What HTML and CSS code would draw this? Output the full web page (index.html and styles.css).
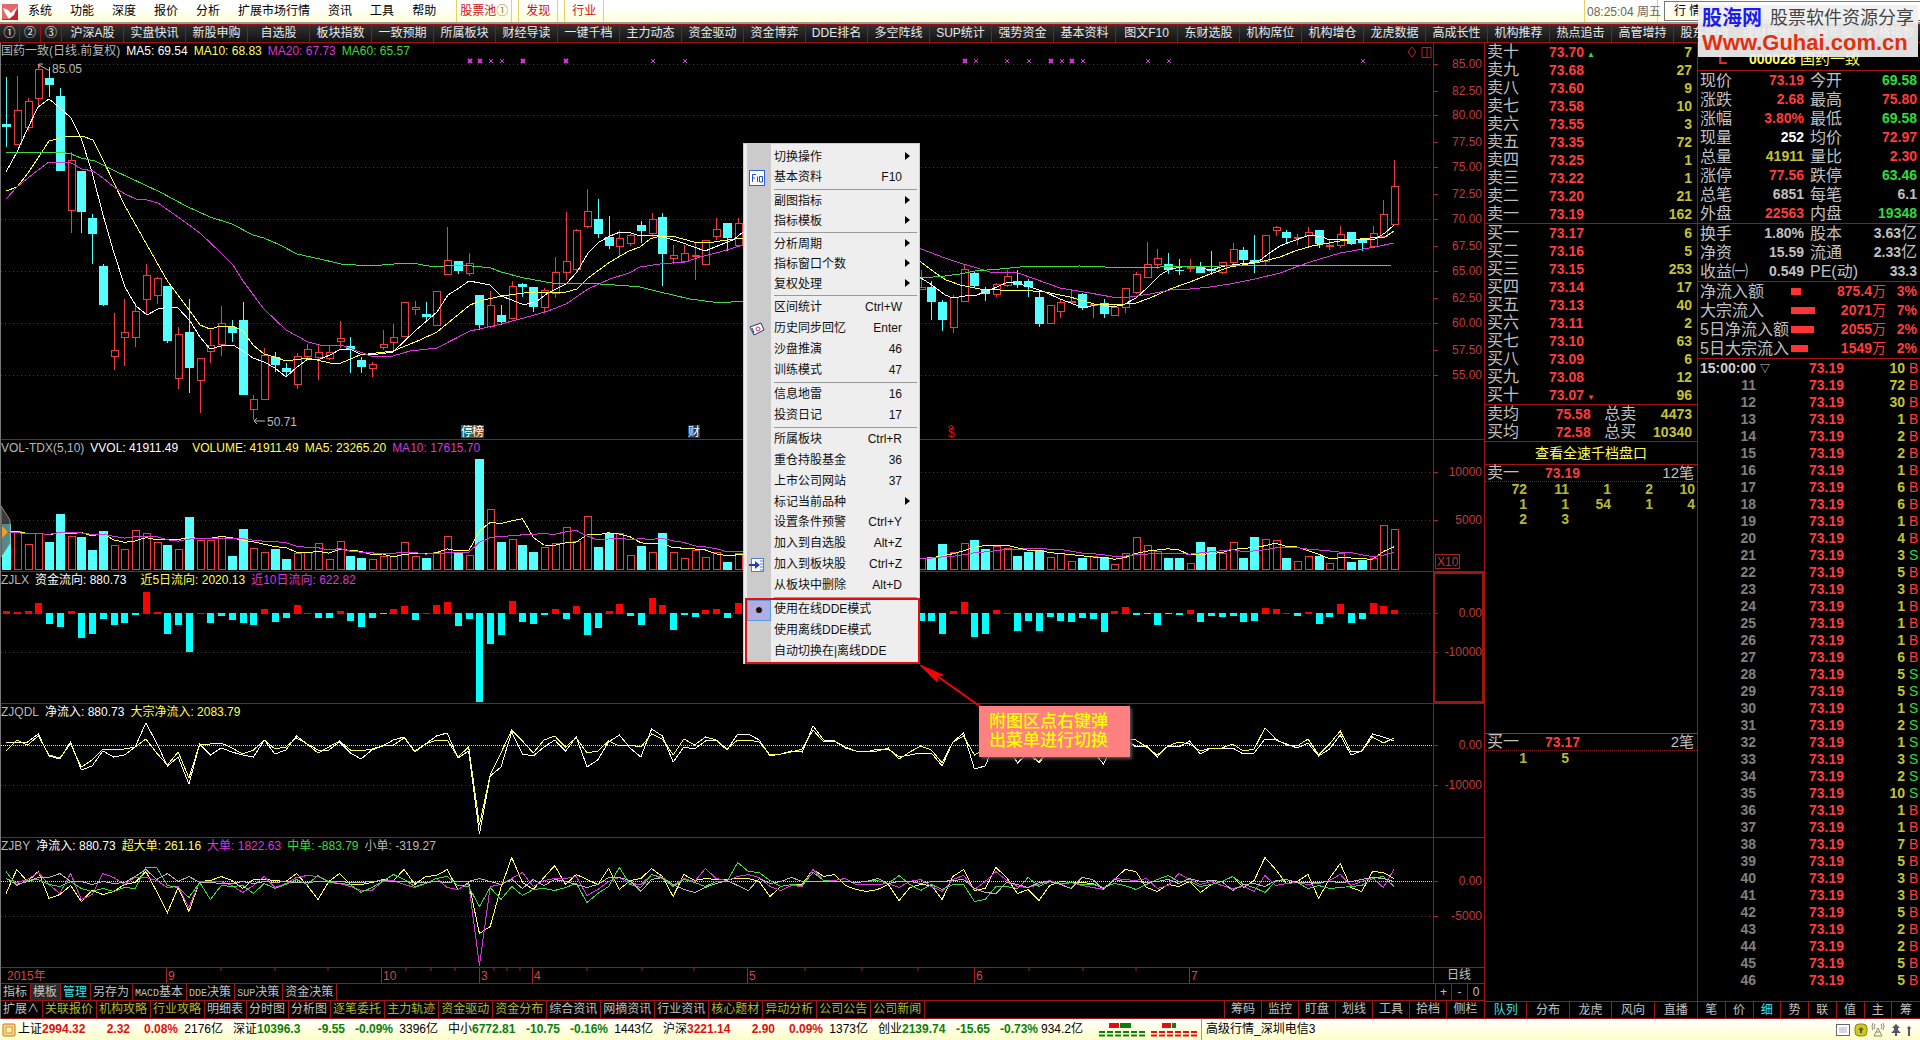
FILE: index.html
```html
<!DOCTYPE html>
<html lang="zh-CN">
<head>
<meta charset="utf-8">
<title>国药一致 000028</title>
<link rel="stylesheet" href="styles.css">
</head>
<body>
<div class="app">
  <header class="menubar">
    <svg class="logo" viewBox="0 0 16 16" aria-hidden="true"><rect width="16" height="16" fill="#c8232c"/><path d="M0 0h16v5L6 15H0z" fill="#e06a6a"/><path d="M1 4l5 2 3 3 6-6-3 8-5 4-4-6z" fill="#fff"/></svg>
    <nav class="menus">
      <button>系统</button><button>功能</button><button>深度</button><button>报价</button><button>分析</button><button>扩展市场行情</button><button>资讯</button><button>工具</button><button>帮助</button>
    </nav>
    <div class="quick"><button>股票池<span class="gold">①</span></button><button>发现</button><button>行业</button></div>
    <div class="clock">08:25:04 周五</div>
    <button class="mode">行 情</button>
  </header>
  <nav class="toolbar" id="toolbar"></nav>

  <main class="main">
    <section class="charts">
      <div class="panel panel-k">
        <div class="plot"><svg id="k"></svg>
          <p class="title"><span class="gr">国药一致(日线.前复权)</span><span class="wh">MA5: 69.54</span><span class="ye">MA10: 68.83</span><span class="ma">MA20: 67.73</span><span class="gn">MA60: 65.57</span></p>
        </div>
        <svg class="axis" id="k-axis"></svg>
      </div>
      <div class="panel">
        <div class="plot"><svg id="vol"></svg>
          <p class="title"><span class="gr">VOL-TDX(5,10)</span><span class="wh wide">VVOL: 41911.49</span><span class="ye">VOLUME: 41911.49</span><span class="ye">MA5: 23265.20</span><span class="ma">MA10: 17615.70</span></p>
        </div>
        <svg class="axis" id="vol-axis"></svg>
      </div>
      <div class="panel">
        <div class="plot"><svg id="flow"></svg>
          <p class="title"><span class="gr">ZJLX</span><span class="wh wide">资金流向: 880.73</span><span class="ye">近5日流向: 2020.13</span><span class="ma">近10日流向: 622.82</span></p>
        </div>
        <svg class="axis active" id="flow-axis"></svg>
      </div>
      <div class="panel panel-q">
        <div class="plot"><svg id="net"></svg>
          <p class="title"><span class="gr">ZJQDL</span><span class="wh">净流入: 880.73</span><span class="ye">大宗净流入: 2083.79</span></p>
        </div>
        <svg class="axis" id="net-axis"></svg>
      </div>
      <div class="panel panel-b">
        <div class="plot"><svg id="split"></svg>
          <p class="title"><span class="gr">ZJBY</span><span class="wh">净流入: 880.73</span><span class="ye">超大单: 261.16</span><span class="ma">大单: 1822.63</span><span class="gn">中单: -883.79</span><span class="gr">小单: -319.27</span></p>
        </div>
        <svg class="axis" id="split-axis"></svg>
      </div>
      <div class="panel dates">
        <div class="plot"><svg id="dates"></svg></div>
        <button class="period">日线</button>
      </div>
      <div class="tabs">
        <button>指标</button><button class="on">模板</button><button class="cy">管理</button><button>另存为</button><button><span class="lat">MACD</span>基本</button><button><span class="lat">DDE</span>决策</button><button><span class="lat">SUP</span>决策</button><button>资金决策</button>
        <div class="zoomers"><button>+</button><button>-</button><button>0</button></div>
      </div>
      <div class="tabs tabs-low">
        <button>扩展∧</button><button class="ol">关联报价</button><button class="ol">机构攻略</button><button class="ol">行业攻略</button><button>明细表</button><button>分时图</button><button>分析图</button><button class="ol">逐笔委托</button><button class="ol">主力轨迹</button><button class="ol">资金驱动</button><button class="ol">资金分布</button><button>综合资讯</button><button>网摘资讯</button><button>行业资讯</button><button class="ol">核心题材</button><button class="ol">异动分析</button><button class="ol">公司公告</button><button class="ol">公司新闻</button>
        <div class="side-tools"><button>筹码</button><button>监控</button><button>盯盘</button><button>划线</button><button>工具</button><button>拾档</button><button>侧栏</button></div>
      </div>

      <svg class="flap" viewBox="0 0 10 52" aria-hidden="true"><path d="M0 0L9 14V37L0 51z" fill="#555" fill-opacity=".7" stroke="#888"/><path d="M1 20l6 6-6 6z" fill="#f0a020"/></svg>
      <div class="context" id="context" role="menu"></div>
      <svg class="pointer" viewBox="0 0 64 46" aria-hidden="true"><path d="M18 12L62 43" stroke="#f00" stroke-width="2"/><path d="M1 1l23 10-5 1-1 6z" fill="#f00" stroke="#f00"/></svg>
      <p class="callout">附图区点右键弹<br>出菜单进行切换</p>
    </section>

    <section class="orders">
      <table class="levels" id="sell"></table>
      <table class="levels" id="buy"></table>
      <table class="levels avg">
        <tr><th>卖均</th><td class="price">75.58</td><th>总卖</th><td class="vol">4473</td></tr>
        <tr><th>买均</th><td class="price">72.58</td><th>总买</th><td class="vol">10340</td></tr>
      </table>
      <a class="full" href="#queue">查看全速千档盘口</a>
      <div class="queue queue-sell" id="queue">
        <h2><span>卖一</span><b>73.19</b><em>12笔</em></h2>
        <div class="lots"><i>72</i><i>11</i><i>1</i><i>2</i><i>10</i><i>1</i><i>1</i><i>54</i><i>1</i><i>4</i><i>2</i><i>3</i></div>
      </div>
      <div class="queue queue-buy">
        <h2><span>买一</span><b>73.17</b><em>2笔</em></h2>
        <div class="lots"><i>1</i><i>5</i></div>
      </div>
      <div class="foot"><button class="cy">队列</button><button>分布</button><button>龙虎</button><button>风向</button><button>直播</button></div>
    </section>

    <section class="quote">
      <h1><span class="flag">L</span><b>000028</b> 国药一致</h1>
      <table class="facts" id="facts"></table>
      <table class="facts" id="facts2"></table>
      <table class="flows" id="flows"></table>
      <table class="ticks" id="ticks"></table>
      <div class="foot foot-right"><button>笔</button><button>价</button><button class="cy">细</button><button>势</button><button>联</button><button>值</button><button>主</button><button>筹</button></div>
    </section>
  </main>

  <footer class="status">
    <svg class="coin" viewBox="0 0 14 14" aria-hidden="true"><rect x="1" y="1" width="12" height="12" rx="1" fill="#ffd890" stroke="#c07810"/><rect x="4" y="4" width="6" height="6" fill="#fff2c0" stroke="#e09020"/></svg>
    <div class="index up"><span>上证</span><b>2994.32</b><b>2.32</b><b>0.08%</b><span>2176亿</span></div>
    <div class="index down"><span>深证</span><b>10396.3</b><b>-9.55</b><b>-0.09%</b><span>3396亿</span></div>
    <div class="index down"><span>中小</span><b>6772.81</b><b>-10.75</b><b>-0.16%</b><span>1443亿</span></div>
    <div class="index up"><span>沪深</span><b>3221.14</b><b>2.90</b><b>0.09%</b><span>1373亿</span></div>
    <div class="index down"><span>创业</span><b>2139.74</b><b>-15.65</b><b>-0.73%</b><span>934.2亿</span></div>
    <svg class="meters" viewBox="0 0 98 14" aria-hidden="true">
      <path d="M10 2.5h10M63 2.5h9" stroke="#e01010" stroke-width="5"/><path d="M21 2.5h11M73 2.5h4" stroke="#0a800a" stroke-width="5"/>
      <path d="M0 9h47M0 12.500h47" stroke="#0a800a" stroke-width="2" stroke-dasharray="6 2"/>
      <path d="M52 9h46M52 12.500h46" stroke="#e01010" stroke-width="2" stroke-dasharray="6 2"/>
    </svg>
    <span class="server">高级行情_深圳电信3</span>
    <svg class="tray" viewBox="0 0 78 14" aria-hidden="true">
      <rect x=".5" y="1.500" width="13" height="11" fill="#fff" stroke="#667"/><path d="M3 5h8M3 7h8M3 9h8" stroke="#aab"/>
      <rect x="19" y="1" width="12" height="12" rx="4" fill="#d0c820" stroke="#8a8410"/><path d="M25 4l3 3h-2v3h-2V7h-2z" fill="#554"/>
      <g fill="none" stroke="#887"><path d="M42 5l-4 8h8zM40 9h4M39 1q-2 3 0 5M45 1q2 3 0 5M37 0q-2 3 0 7M47 0q2 3 0 7"/></g>
      <path d="M60 1l4 4h-2v2l3 3h-4v3h-2v-3h-4l3-3V5h-2zM73 3l2 2-1 1v7h-2V6l-1-1z" fill="#556"/>
    </svg>
  </footer>

  <div class="watermark">
    <p class="wm-top"><strong>股海网</strong><span>股票软件资源分享</span></p>
    <p class="wm-url">Www.Guhai.com.cn</p>
  </div>
</div>
<script src="app.js"></script>
</body>
</html>
```
FILE: styles.css
```css
* { box-sizing: border-box; }
html, body { margin: 0; background: #000; }
body { font: 12px/16px "Liberation Sans", "Noto Sans CJK SC", sans-serif; color: #c0c0c0; }
p, h1, h2 { margin: 0; font-size: inherit; font-weight: inherit; }
button { font: inherit; color: inherit; background: none; border: 0; padding: 0; white-space: nowrap; }
table { border-collapse: collapse; width: 100%; table-layout: fixed; }
th { font-weight: 400; text-align: left; }
th, td { padding: 0; white-space: nowrap; vertical-align: top; }
.app { position: relative; min-height: 100vh; display: flex; flex-direction: column; overflow: hidden; }

.wh { color: #fff; } .ye { color: #ff5; } .ma { color: #d838d8; } .gn { color: #3ddc3d; } .gr { color: #b8b8b8; }
.cy { color: #3ce0e8; } .ol { color: #b4b432; }

.menubar { display: flex; height: 24px; background: linear-gradient(#fff 30%, #ffffd8); border-bottom: 2px solid #999; color: #000; line-height: 22px; }
.logo { width: 16px; height: 16px; margin: 4px 10px 0 2px; }
.menus { display: flex; gap: 18px; }
.quick { display: flex; gap: 6px; margin-left: 20px; color: #d01010; }
.quick button { border: solid #e8d060; border-width: 0 1px; padding: 0 3px; }
.quick button + button { padding: 0 7px; }
.gold { color: #b08010; }
.clock { margin-left: auto; border: solid #e8d060; border-width: 0 1px; padding: 0 2px; width: 74px; white-space: nowrap; color: #666; line-height: 24px; }
.mode { width: 256px; margin: 1px 0 0 6px; padding-left: 9px; text-align: left; border: 1px solid #777; border-right: 0; height: 20px; line-height: 18px; }

.toolbar { display: flex; height: 19px; overflow: hidden; border: solid #a01010; border-width: 1px 0; background: linear-gradient(#333, #111); color: #e8e8e8; line-height: 17px; }
.toolbar button { flex: 0 0 62px; border-right: 1px solid #a01010; }
.toolbar .num { flex-basis: 21px; }
.toolbar .num:first-child { flex-basis: 20px; }

.main { flex: 1; display: grid; grid-template-columns: minmax(0, 1fr) 213px 223px; }
.charts { position: relative; display: flex; flex-direction: column; border-left: 1px solid #777; }
.panel { display: flex; height: 132px; border-bottom: 1px solid #a01414; }
.panel-k { height: 397px; }
.panel-q { height: 134px; }
.panel-b { height: 130px; }
.plot { flex: 1; position: relative; min-width: 0; overflow: hidden; }
.plot svg { display: block; width: 100%; height: 100%; }
.axis { width: 51px; height: 100%; border-left: 1px solid #a01414; display: block; }
.axis.active { outline: 2px solid #a01414; outline-offset: -2px; }
.title { position: absolute; left: 0; top: 0; display: flex; gap: 6px; white-space: nowrap; }
.title .wide { margin-right: 8px; }
svg text { font-size: 12px; }
.dates { height: 16px; }
.period { width: 51px; border-left: 1px solid #a01414; line-height: 15px; }
.tabs { display: flex; height: 17px; border-bottom: 1px solid #a01414; line-height: 15px; }
.tabs-low { height: 18px; line-height: 17px; }
.tabs button { border-right: 1px solid #a01414; padding: 0 3px 0 2px; }
.tabs .on { background: #2a2a2a; }
.lat { font: 10px "Liberation Mono", monospace; }
.zoomers, .side-tools { margin-left: auto; display: flex; border-left: 1px solid #a01414; }
.zoomers button { width: 16px; padding: 0; }
.side-tools button { width: 37px; padding: 0; }
.zoomers button:last-child, .side-tools button:last-child { border-right: 0; }

.flap { position: absolute; left: 0; top: 463px; width: 10px; height: 52px; }
.context { position: absolute; left: 742px; top: 100px; width: 177px; padding: 3px 2px 3px 3px; border: 1px solid #ccc; background: linear-gradient(90deg, #eee 3px, #cbcbcb 3px, #cbcbcb 27px, #eee 27px); color: #111; }
.context button { position: relative; display: flex; justify-content: space-between; width: 100%; height: 21px; line-height: 21px; padding: 0 15px 0 27px; }
.context .sub { height: 20px; line-height: 20px; }
.context .sub::after { content: ""; margin: 5px -8px 0 0; height: 0; border: 4px solid transparent; border-left: 5px solid #000; border-right: 0; }
.context hr { margin: 1px 0 1px 27px; border: 0; height: 1px; background: #999; }
.context svg { position: absolute; left: 2px; top: 3px; width: 16px; height: 16px; }
.context .modes { margin: 0 -2px -3px -1px; padding: 0 2px 1px 1px; outline: 2px solid #e01010; outline-offset: -1px; }
.context .checked::before { content: "●"; position: absolute; left: 0; top: 1px; width: 22px; height: 19px; line-height: 17px; font-size: 14px; text-align: center; background: #b0aee0; border: 1px solid #58a0e0; }
.pointer { position: absolute; left: 918px; top: 621px; width: 64px; height: 46px; fill: none; }
.callout { position: absolute; left: 978px; top: 663px; width: 151px; height: 51px; padding: 6px 0 0 10px; background: #ff8080; color: #ff0; font-size: 17px; line-height: 19px; font-weight: 500; box-shadow: 2px 2px 3px #555; }

.orders, .quote { display: flex; flex-direction: column; border-left: 1px solid #a01414; font-size: 14px; }
.levels { border-bottom: 1px solid #a01414; }
.levels th, .levels td { height: 18px; line-height: 18px; overflow: hidden; }
.levels th { width: 64px; padding-left: 2px; font-size: 16px; }
.levels td { font-weight: 700; }
.price { color: #ff3c3c; }
.levels .vol { text-align: right; padding-right: 5px; color: #c4c432; }
.best { padding-left: 3px; font-size: 8px; line-height: 8px; }
.avg th + td { width: 44px; }
.avg td + th { width: 40px; padding-left: 0; }
.full { display: block; height: 23px; line-height: 22px; border-bottom: 1px solid #a01414; text-align: center; color: #ff5; text-decoration: none; }
.queue-sell { height: 269px; border-bottom: 1px solid #c02020; }
.queue-buy { flex: 1; }
.queue h2 { display: flex; height: 17px; line-height: 16px; font-size: 16px; border-bottom: 1px dotted #802020; padding: 0 3px 0 2px; }
.queue h2 span { width: 58px; }
.queue h2 b { font-size: 14px; color: #ff3c3c; }
.queue h2 em { margin-left: auto; font-style: normal; font-size: 15px; }
.lots { display: grid; grid-template-columns: repeat(5, 1fr); line-height: 15px; padding: 0 2px 0 0; }
.lots i { font-style: normal; font-weight: 700; text-align: right; color: #b8b830; }
.foot { display: grid; grid-template-columns: repeat(5, 1fr); height: 18px; border: solid #a01414; border-width: 1px 0; font-size: 12px; line-height: 16px; }
.foot-right { grid-template-columns: repeat(8, 1fr); margin-top: auto; }
.foot button { border-right: 1px solid #a01414; }
.foot button:last-child { border-right: 0; }

.quote h1 { height: 28px; padding: 6px 0 0 20px; line-height: 20px; border-bottom: 1px solid #a01414; color: #ff5; font-size: 15px; }
.quote h1 b { font-size: 14px; }
.flag { display: inline-block; width: 31px; color: #e03030; font-weight: 700; }
.facts, .flows { border-bottom: 1px solid #a01414; }
.facts th, .facts td, .flows th, .flows td { height: 19px; line-height: 19px; }
.facts th { width: 50px; font-size: 16px; padding-left: 2px; }
.facts td + th { padding-left: 6px; width: 60px; }
.facts td { text-align: right; font-weight: 700; }
.facts td:last-child { padding-right: 3px; }
.facts small { font-size: 16px; line-height: 16px; font-weight: 400; }
.flows th { width: 93px; padding-left: 2px; font-size: 16px; }
.flows td { color: #ff3c3c; text-align: right; font-weight: 700; }
.flows td:nth-child(2) { width: 25px; vertical-align: middle; }
.flows td:last-child { width: 34px; padding-right: 3px; }
.flows small { font-size: 14px; line-height: 14px; font-weight: 400; }
.bar { display: block; height: 7px; background: #f33; }
.ticks { margin-top: 1px; }
.ticks th, .ticks td { height: 17px; line-height: 17px; }
.ticks th { width: 58px; text-align: right; color: #808080; font-weight: 700; }
.ticks tr:first-child th { color: #d0d0d0; }
.ticks td { font-weight: 700; text-align: right; color: #c4c432; }
.ticks .mark { width: 14px; text-align: left; font-weight: 400; font-size: 10px; padding-left: 4px; color: #d0d0d0; }
.ticks .price { width: 74px; color: #ff3c3c; }
.ticks .side { width: 15px; font-weight: 400; text-align: left; padding-left: 4px; }
.red, .ticks .side.red { color: #ff3c3c; }
.green, .ticks .side.green { color: #2edc3a; }
.white { color: #fff; }
.yellow { color: #c4c432; }

.status { display: flex; height: 21px; line-height: 21px; background: linear-gradient(#fff, #ffffc8); color: #000; white-space: nowrap; }
.coin { width: 14px; height: 14px; margin: 4px 2px 0; }
.index { display: grid; grid-template-columns: 24px 46px 42px 48px 45px; width: 215px; }
.index > :nth-child(n+3) { text-align: right; }
.up b { color: #e01010; }
.down b { color: #0a800a; }
.meters { width: 98px; height: 14px; margin: 4px 4px 0 6px; }
.server { border-left: 1px solid #999; padding-left: 4px; }
.tray { width: 78px; height: 14px; margin: 4px 6px 0 auto; }

.watermark { position: absolute; right: 2px; top: 5px; width: 220px; height: 52px; padding-left: 4px; background: rgba(240, 240, 240, .93); white-space: nowrap; }
.wm-top { display: flex; gap: 8px; line-height: 26px; font-size: 18px; color: #444; }
.wm-top strong { font-size: 20px; color: #1c1cf0; }
.wm-url { font-size: 22px; line-height: 24px; font-weight: 700; color: #e03010; }
```
FILE: app.js
```js
const $ = id => document.getElementById(id);

/* ---- toolbar, context menu and side tables ---- */
const tools = '沪深A股 实盘快讯 新股申购 自选股 板块指数 一致预期 所属板块 财经导读 一键千档 主力动态 资金驱动 资金博弈 DDE排名 多空阵线 SUP统计 强势资金 基本资料 图文F10 东财选股 机构席位 机构增仓 龙虎数据 高成长性 机构推荐 热点追击 高管增持 股东增持 理财增值 季报年报 价格指数'.split(' ');
$('toolbar').innerHTML = ['①', '②', '③'].map(t => `<button class="num">${t}</button>`).join('') + tools.map(t => `<button>${t}</button>`).join('');

const icons = {
  基本资料: '<svg viewBox="0 0 16 16"><rect x=".5" y=".5" width="15" height="15" fill="#fff" stroke="#3060d0"/><path d="M3.500 12V4.500H7M3.500 8H6M8.500 12V6.500M10.500 6.500h3V12h-3z" fill="none" stroke="#2050c8"/></svg>',
  历史同步回忆: '<svg viewBox="0 0 16 16"><path d="M1 6l11-4 3 7-10 5z" fill="#fff" stroke="#203878"/><path d="M3 7l2 5" stroke="#203878"/><circle cx="9" cy="8" r="2" fill="none" stroke="#d03050"/></svg>',
  加入到板块股: '<svg viewBox="0 0 16 16"><rect x="2.500" y="1.500" width="12" height="13" fill="#fff" stroke="#5080d0"/><path d="M11 4h3M11 7h3M11 10h3M11 13h3" stroke="#5080d0"/><path d="M0 7h6V4l5 4-5 4V9H0z" fill="#2040c0"/></svg>'
};
const entry = s => {
  if (s === '-') return '<hr>';
  const [name, key] = s.split('|');
  return key === '>' ? `<button class="sub" role="menuitem">${name}</button>` : `<button role="menuitem">${icons[name] || ''}<span>${name}</span><span>${key}</span></button>`;
};
$('context').innerHTML = ['切换操作|>', '基本资料|F10', '-', '副图指标|>', '指标模板|>', '-', '分析周期|>', '指标窗口个数|>', '复权处理|>', '-', '区间统计|Ctrl+W', '历史同步回忆|Enter', '沙盘推演|46', '训练模式|47', '-', '信息地雷|16', '投资日记|17', '-', '所属板块|Ctrl+R', '重仓持股基金|36', '上市公司网站|37', '标记当前品种|>', '设置条件预警|Ctrl+Y', '加入到自选股|Alt+Z', '加入到板块股|Ctrl+Z', '从板块中删除|Alt+D', '-'].map(entry).join('') +
  '<div class="modes"><button class="checked" role="menuitemradio" aria-checked="true">使用在线DDE模式</button><button role="menuitemradio" aria-checked="false">使用离线DDE模式</button><button role="menuitemradio" aria-checked="false">自动切换在|离线DDE</button></div>';

const level = (side, names, data) => data.map(([p, v], i) => {
  const mark = side === '卖' && i === 0 ? '<span class="best green">▲</span>' : side === '买' && i === 9 ? '<span class="best">▼</span>' : '';
  return `<tr><th>${side}${names[i]}</th><td class="price">${p}${mark}</td><td class="vol">${v}</td></tr>`;
}).join('');
$('sell').innerHTML = level('卖', '十九八七六五四三二一', [['73.70', 7], ['73.68', 27], ['73.60', 9], ['73.58', 10], ['73.55', 3], ['73.35', 72], ['73.25', 1], ['73.22', 1], ['73.20', 21], ['73.19', 162]]);
$('buy').innerHTML = level('买', '一二三四五六七八九十', [['73.17', 6], ['73.16', 5], ['73.15', 253], ['73.14', 17], ['73.13', 40], ['73.11', 2], ['73.10', 63], ['73.09', 6], ['73.08', 12], ['73.07', 96]]);

const fact = ([a, b, c, d, e, f]) => `<tr><th>${a}</th><td class="${c}">${b}</td><th>${d}</th><td class="${f}">${e}</td></tr>`;
$('facts').innerHTML = [['现价', '73.19', 'red', '今开', '69.58', 'green'], ['涨跌', '2.68', 'red', '最高', '75.80', 'red'], ['涨幅', '3.80%', 'red', '最低', '69.58', 'green'], ['现量', '252', 'white', '均价', '72.97', 'red'], ['总量', '41911', 'yellow', '量比', '2.30', 'red'], ['涨停', '77.56', 'red', '跌停', '63.46', 'green'], ['总笔', '6851', '', '每笔', '6.1', ''], ['外盘', '22563', 'red', '内盘', '19348', 'green']].map(fact).join('');
$('facts2').innerHTML = [['换手', '1.80%', '', '股本', '3.63<small>亿</small>', ''], ['净资', '15.59', '', '流通', '2.33<small>亿</small>', ''], ['收益㈠', '0.549', '', 'PE(动)', '33.3', '']].map(fact).join('');
$('flows').innerHTML = [['净流入额', 10, '875.4', '3%'], ['大宗流入', 24, '2071', '7%'], ['5日净流入额', 23, '2055', '2%'], ['5日大宗流入', 17, '1549', '2%']].map(([n, w, v, p]) => `<tr><th>${n}</th><td><span class="bar" style="width:${w}px"></span></td><td>${v}<small>万</small></td><td>${p}</td></tr>`).join('');
$('ticks').innerHTML = '10B 72B 30B 1B 2B 2B 1B 6B 6B 1B 4B 3S 5B 3B 1B 1B 1B 6B 5S 5S 1S 2S 1S 3S 2S 10S 1B 1B 7B 5B 3B 3B 5B 2B 2B 5B 5B'.split(' ').map((t, i) => {
  const side = t.slice(-1);
  return `<tr><th>${i ? i + 10 : '15:00:00'}</th><td class="mark">${i ? '' : '▽'}</td><td class="price">73.19</td><td>${t.slice(0, -1)}</td><td class="side ${side === 'B' ? 'red' : 'green'}">${side}</td></tr>`;
}).join('');

/* ---- daily candles: direction, high, body top, body bottom, low ---- */
const candles = `c77,124,127,147 r76,110,145,145 r98,101,128,131 r64,69,99,108 c67,78,85,97 c88,96,171,171 r152,160,211,233 c171,171,212,233 c214,218,234,264 c264,266,305,306
r313,350,357,370 r299,332,338,366 r303,311,338,347 r264,275,300,314 r277,278,296,304 c286,286,341,343 r327,334,379,389 c299,332,368,393 r358,358,381,413 r330,345,352,363
r306,323,345,356 c320,327,333,342 c302,320,395,395 r395,399,410,420 r348,355,400,400 c352,357,365,372 c363,368,372,377 r353,356,385,389 r344,349,357,360 r345,352,358,380
r345,352,359,360 r321,338,342,348 c337,346,350,373 c357,360,367,373 r362,364,369,377 r330,344,348,350 r324,337,343,352 r302,302,337,337 r301,307,310,315 c302,314,317,320
r291,291,326,326 r227,260,275,275 c261,261,271,274 r253,263,274,276 c295,295,325,330 r291,305,327,328 c305,315,322,325 r281,286,319,319 c283,284,287,297 c287,287,307,312
r288,290,308,311 r257,272,294,298 r212,261,273,280 r229,230,270,272 r189,211,227,228 c199,219,234,238 c216,237,246,249 r230,238,247,256 r234,235,244,246 c221,225,231,243
r213,219,234,237 c213,217,254,286 r245,255,259,264 r245,253,262,263 r243,255,256,280 r240,240,265,265 r218,229,237,240 c223,223,238,251 r218,223,246,246 r215,220,236,240
c218,222,240,244 c224,230,246,250 r226,232,244,248 c230,236,250,254 r234,238,250,252 r226,230,244,246 c228,232,250,254 c236,244,260,262 r240,246,258,262 c246,250,264,268
c250,258,272,276 r256,260,272,276 c258,262,276,280 c264,270,284,288 r268,274,288,290 r270,287,290,290 c281,287,302,320 c300,302,320,331 r295,297,328,333 r264,269,302,302
c271,273,286,288 c287,290,294,301 r283,284,295,297 r270,276,286,287 c270,281,285,288 c279,281,287,297 c291,297,324,327 r305,305,324,324 r300,302,312,318 r290,301,303,303
c293,294,308,310 r304,304,306,318 c299,303,314,318 r305,307,316,316 r288,288,308,313 r272,274,293,294 r242,264,278,278 r249,258,265,269 c253,264,270,274 c259,270,271,275
r259,267,269,272 c262,267,273,273 c251,269,271,275 r262,262,273,274 r243,249,263,264 c247,250,260,264 c235,260,263,273 r235,235,262,265 r226,227,231,236 c230,232,238,244
r234,237,239,245 r227,232,236,247 c230,230,244,248 r240,245,247,250 r226,234,246,248 c232,232,244,245 c239,240,243,251 r226,233,247,248 r200,214,237,238 r160,186,225,225`
  .split(/\s+/).map(s => ({ down: s[0] === 'c', v: s.slice(1).split(',').map(Number) }));

const averages = {
  '#fff': '6,172 17,152 27,130 38,107 49,99 59,107 71,118 81,138 92,172 103,215 114,253 125,287 136,306 147,315 158,309 168,307 178,308 190,321 200,337 210,349 221,346 233,345 243,351 253,358 264,362 275,368 286,377 297,367 308,359 320,359 330,355 341,349 350,349 360,354 371,355 393,352 415,331 437,312 448,295 459,288 469,281 480,283 490,285 501,296 512,300 524,305 537,301 548,293 566,284 577,272 588,253 599,242 610,236 620,232 631,233 640,236 650,235 660,236 680,242 694,247 705,251 720,245 733,240 743,232 800,240 860,254 921,278 932,285 945,295 953,298 965,296 977,295 990,290 1008,282 1020,284 1030,287 1045,292 1060,299 1084,308 1098,304 1112,307 1123,305 1136,298 1148,287 1160,275 1170,269 1182,267 1195,266 1210,270 1225,266 1240,264 1258,262 1268,254 1280,246 1290,242 1310,235 1322,237 1330,240 1345,239 1360,240 1375,239 1385,233 1394,225',
  '#ff5': '6,191 17,187 28,173 38,158 49,141 60,138 71,136 82,136 93,140 103,160 125,206 147,245 168,282 190,311 200,325 210,329 221,326 233,326 243,331 253,345 264,354 275,357 286,361 308,358 330,363 341,363 360,355 393,351 420,340 437,332 470,305 480,301 501,296 524,293 544,292 566,292 577,289 588,278 610,262 629,251 640,247 650,239 660,236 672,236 694,242 708,243 720,241 743,238 830,240 921,262 934,272 946,280 960,285 980,289 1000,290 1020,290 1045,292 1070,297 1094,304 1112,305 1125,304 1136,303 1150,298 1170,289 1190,282 1210,274 1230,267 1260,262 1280,257 1295,251 1312,246 1340,241 1370,238 1385,237 1394,231',
  '#d838d8': '6,199 17,187 28,178 38,170 49,162 60,162 71,163 82,169 93,171 103,178 114,187 125,194 136,199 147,200 158,203 178,217 200,233 221,253 233,265 243,281 264,309 286,330 308,342 320,345 341,345 371,356 393,356 410,351 437,348 470,331 493,326 524,318 548,311 566,304 588,289 610,279 629,273 640,267 660,264 685,262 700,257 720,252 743,245 830,240 921,249 945,258 960,263 977,268 990,272 1018,273 1035,279 1060,288 1090,293 1112,297 1130,297 1150,294 1170,290 1190,289 1210,287 1230,284 1255,279 1280,273 1310,262 1340,253 1375,247 1394,243',
  '#3ddc3d': '6,152 33,152 60,152 71,154 81,158 95,161 115,171 160,192 186,206 210,217 232,224 253,235 264,238 280,245 297,254 320,259 341,264 371,266 405,263 418,264 434,267 455,265 472,266 491,268 501,272 524,278 552,283 577,283 600,284 629,286 640,287 660,292 690,299 705,301 720,303 743,301 830,290 921,278 945,276 960,274 975,271 1000,269 1020,267 1080,266 1130,268 1160,267 1220,266 1394,265'
};
const volume = [46,39,26,37,28,56,34,33,20,39,25,21,40,37,28,25,21,53,30,30,34,14,41,22,18,21,11,17,18,27,11,29,14,12,11,14,14,28,14,12,18,34,17,15,111,61,28,31,25,18,23,27,43,29,54,23,37,37,15,24,18,37,18,12,20,13,18,8,17,18,17,14,16,20,12,18,12,14,12,12,10,12,12,10,12,12,13,26,18,27,30,21,24,22,14,18,20,13,17,9,12,14,13,6,17,33,25,19,12,12,7,28,23,17,28,12,33,31,30,12,9,14,14,7,17,8,10,12,45,41];
const flow = [3,2,3,11,-11,-14,3,-25,-21,-6,-12,-10,-2,22,2,-21,-12,-39,1,-10,-3,-7,-10,-12,5,-9,-5,9,1,-5,-5,3,-8,-14,-5,-1,5,8,-7,1,9,12,-13,-6,-89,-31,-22,13,-9,-11,-2,5,-6,8,-22,-15,3,10,-3,-12,16,9,-17,-2,-4,4,5,-5,11,11,5,-11,-9,-6,-7,19,5,4,-3,-6,-7,-4,-4,-12,-10,-8,-8,-21,3,12,-24,-21,4,1,-18,-8,-18,-4,-8,-9,-5,-6,-19,3,7,-2,-1,-12,-1,-2,4,-9,-3,-4,-3,-9,-8,6,5,1,-3,2,-11,-4,10,-10,-6,11,8,4];
const block = [-6,5,0,9,-10,-13,1,-22,-15,-4,-4,-4,-2,6,-8,-20,-7,-33,1,1,2,-3,-9,-5,5,-4,-2,7,1,-8,-2,4,-5,-6,-4,-1,0,7,-6,1,5,5,-12,-2,-80,-30,-8,15,4,-8,5,9,-2,7,-8,-6,4,-1,0,-2,11,6,-10,6,0,8,5,-4,5,5,3,-10,-9,-7,-4,15,3,4,-2,-6,-7,-6,-3,-14,-7,-1,-5,-18,3,9,-10,-4,4,0,-12,-8,-17,-2,-3,0,-2,-4,-10,8,7,5,-2,-10,-1,3,1,-6,-3,-3,1,-6,-4,17,6,0,-1,6,-10,1,14,-7,-6,8,2,7];
const orders = {
  '#ff5': [-12,12,0,10,-17,-13,-4,-20,-9,-13,-10,-3,-1,10,-10,-31,-6,-30,0,1,5,1,-7,2,2,1,0,8,-4,-18,0,8,-3,-3,-1,2,1,12,-3,5,6,12,-8,-1,-52,-45,-6,24,-1,-8,4,16,-3,7,2,-3,13,-8,1,3,13,5,-15,7,1,3,2,2,3,3,0,-15,-5,-3,-3,12,5,7,-4,-8,-10,-8,-3,-19,-6,-3,-4,-18,5,12,-9,-7,14,4,-12,-8,-19,-4,0,-1,-1,-2,-7,2,12,10,-6,-10,-3,-5,0,-11,-3,0,5,-6,1,24,12,-2,0,7,-17,3,18,-6,-10,10,9,3],
  '#d838d8': [3,-1,2,9,-3,-12,8,-18,-13,8,4,-3,4,4,1,-6,-5,-26,0,0,0,-4,-11,-4,5,-6,-2,4,6,5,0,-2,-5,-9,-9,0,1,-3,-6,-2,3,-6,-8,-2,-84,-5,-3,3,9,-5,1,3,3,5,-14,-8,0,4,-2,-3,7,4,-4,3,0,13,3,1,5,7,4,-5,-9,-4,-5,12,1,1,3,-3,-3,-3,-2,-6,0,2,-5,-10,2,6,-8,0,10,1,-5,-6,-3,1,-3,-1,-4,-6,-8,3,2,1,3,-7,-4,8,2,-3,0,-4,-7,-5,-10,6,-4,-2,-1,-3,-2,1,7,-4,0,4,-6,12],
  '#3ddc3d': [10,-4,1,2,-3,-5,0,-7,-10,-7,-10,-6,-7,14,14,-4,-6,-16,-1,-18,-4,-5,-4,-12,-2,-7,-3,2,-3,6,-1,-2,-3,-11,-6,0,7,2,-5,-2,3,5,-4,-5,-25,-6,-18,-5,-14,-8,-7,-9,-6,-2,-21,-12,-5,14,-3,-6,7,3,-5,2,-1,-5,0,0,19,10,9,1,-5,-3,-4,9,1,0,0,-1,0,1,-2,6,-3,-9,-3,-8,-3,-3,-20,-18,-5,-5,-7,4,-5,0,-2,-1,-3,-3,-6,-2,-4,-8,-3,2,6,0,0,-5,-3,0,5,-3,-6,-11,0,2,-1,-7,-4,-7,-6,-5,-4,3,5,-5],
  '#b8b8b8': [3,-3,0,4,4,8,0,0,-3,0,-2,-1,5,12,2,8,0,5,-1,-1,-2,-2,0,-2,0,-1,0,-1,-1,0,0,0,-1,-1,0,1,0,0,-1,-1,0,-1,0,0,3,0,-3,2,-7,2,-4,2,0,-3,-6,-3,4,4,1,-10,2,4,-3,-8,-11,-6,-2,1,-4,-9,3,-2,0,4,0,0,0,0,0,-1,0,3,-2,0,0,-2,0,0,1,2,-7,-11,-12,-1,-3,-6,-1,0,-3,-7,4,2,-8,2,0,0,-1,0,2,-2,3,0,1,0,-9,-3,-2,-5,1,2,-1,-1,-1,0,-1,0,2,4,3,0]
};

const RED = '#a82020', UP = '#f03c3c', CYAN = '#54ffff';

function draw() {
  const unit = $('k').clientWidth / 1432;
  const x = i => (5 + 10.76 * i) * unit;
  const rect = (cx, y, h, fill, w = 9) => `<rect x="${Math.round(cx) - (w >> 1)}" y="${y}" width="${w}" height="${h}" fill="${fill}"/>`;
  const hollow = (cx, y, h) => `<rect x="${Math.round(cx) - 3.5}" y="${y + .5}" width="7" height="${Math.max(h, 1)}" fill="none" stroke="${UP}"/>`;
  const line = (pts, color) => `<polyline points="${pts}" fill="none" stroke="${color}"/>`;
  const grid = (y, color = '#8c1c1c', dash = '1 3') => `<line x1="0" x2="100%" y1="${y + .5}" y2="${y + .5}" stroke="${color}" stroke-dasharray="${dash}"/>`;
  const perDay = (a, zero) => a.map((v, i) => `${x(i)},${zero - v}`).join(' ');
  const text = (s, tx, ty, fill) => `<text x="${tx}" y="${ty}" fill="${fill}">${s}</text>`;
  const crisp = s => `<g shape-rendering="crispEdges">${s}</g>`;
  const top = 43;

  let out = [21, 72, 124, 176, 228, 280, 332].map(y => grid(y)).join('');
  candles.forEach(({ down, v: [h, t, b, l] }, i) => {
    const cx = Math.round(x(i)) + .5, c = down ? CYAN : UP;
    const stem = (a, z) => z > a ? `<line x1="${cx}" x2="${cx}" y1="${a - top}" y2="${z - top}" stroke="${c}"/>` : '';
    out += stem(h, t) + stem(b, l) + (down ? rect(cx - .5, t - top, b - t, c) : hollow(cx, t - top, b - t - 1));
  });
  for (const c in averages) out += line(averages[c].split(' ').map(p => { const [a, b] = p.split(','); return `${(a - 1) * unit},${b - top}`; }).join(' '), c);
  $('k').innerHTML = crisp(out) +
    [470, 480, 491, 502, 523, 566, 653, 685, 965, 976, 1007, 1029, 1051, 1062, 1072, 1083, 1148, 1169, 1363].map(m => `<path d="M${m * unit - 3} 16l4 4m0-4l-4 4" stroke="#d838d8" stroke-width="${[470, 480, 523, 566, 965, 1051, 1072].includes(m) ? 2 : 1}"/>`).join('') +
    `<path d="M49 28L38 22m4-1h-4v4" fill="none" stroke="#b8b8b8"/><path d="M264 378h-11m3-3l-3 3 3 3" fill="none" stroke="#b8b8b8"/>` +
    text('85.05', 51, 30, '#b8b8b8') + text('50.71', 266, 383, '#b8b8b8') +
    `<path d="M${1411 * unit} 4l4 5-4 5-4-5zM${1421 * unit} 4.500h9v10h-9zM${1426 * unit} 4v10" fill="none" stroke="#c02020"/>` +
    [[461, '停', '#107078'], [472, '榜', '#804010'], [688, '财', '#103868']].map(([bx, s, c]) => `<rect x="${(bx - 1) * unit}" y="382" width="12" height="13" fill="${c}"/>` + text(s, (bx - 1) * unit, 393, '#fff')).join('') +
    text('$', 947 * unit, 394, '#f00') + `<path d="M${947 * unit} 385l3-3 3 3" fill="none" stroke="#f00"/>`;

  const mean = n => volume.map((_, i) => { let s = 0; for (let j = i - n + 1; j <= i; j++) s += j < 0 ? 36 : volume[j]; return s / n; });
  $('vol').innerHTML = crisp(grid(32) + grid(80) + volume.map((v, i) => candles[i].down ? rect(x(i), 130 - v, v, CYAN) : hollow(Math.round(x(i)) + .5, 130 - v, v - 1)).join('') +
    line(perDay(mean(5), 130), '#ff5') + line(perDay(mean(10), 130), '#d838d8'));

  $('flow').innerHTML = crisp(grid(41) + grid(80) + flow.map((v, i) => v > 0 ? rect(x(i), 42 - v, v, '#f00', 7) : rect(x(i), 41, -v, '#0ff', 7)).join(''));
  $('net').innerHTML = crisp(grid(41, '#ddd', '1 1') + grid(81) + line(perDay(flow, 41), '#fff') + line(perDay(block, 41), '#ff5'));
  $('split').innerHTML = crisp(grid(43, '#ddd', '1 1') + grid(78) + Object.keys(orders).map(c => line(perDay(orders[c], 43.5), c)).join(''));

  $('dates').innerHTML = [[0, '2015年'], [166, '9'], [381, '10'], [479, '3'], [532, '4'], [747, '5'], [974, '6'], [1189, '7']].map(([m, s]) =>
    (m ? `<line x1="${Math.round(m * unit) - .5}" x2="${Math.round(m * unit) - .5}" y1="0" y2="16" stroke="${RED}"/>` : '') + text(s, m ? m * unit + 1 : 6, 12, '#d04848')).join('') +
    [220, 274, 327, 405, 430, 454, 493, 506, 519, 586, 641, 693, 804, 861, 917, 1028, 1082, 1135].map(m => `<path d="M${m * unit} 0v3" stroke="${RED}"/>`).join('');
}

function axis(id, marks, extra = '') {
  $(id).innerHTML = marks.map(([y, s]) => `<path d="M0 ${y + .5}h4" stroke="${RED}"/><text x="48" y="${y + 4}" text-anchor="end" fill="#c03c3c">${s}</text>`).join('') + extra;
}
axis('k-axis', [21, 48, 72, 99, 124, 151, 176, 203, 228, 255, 280, 307, 332].map((y, i) => [y, (85 - i * 2.5).toFixed(2)]));
axis('vol-axis', [[32, '10000'], [80, '5000']], `<rect x="1.500" y="114.500" width="24" height="14" fill="none" stroke="${RED}"/><text x="3" y="126" fill="#b83838">X10</text>`);
axis('flow-axis', [[41, '0.00'], [80, '-10000']]);
axis('net-axis', [[41, '0.00'], [81, '-10000']]);
axis('split-axis', [[43, '0.00'], [78, '-5000']]);
draw();
addEventListener('resize', draw);
```
